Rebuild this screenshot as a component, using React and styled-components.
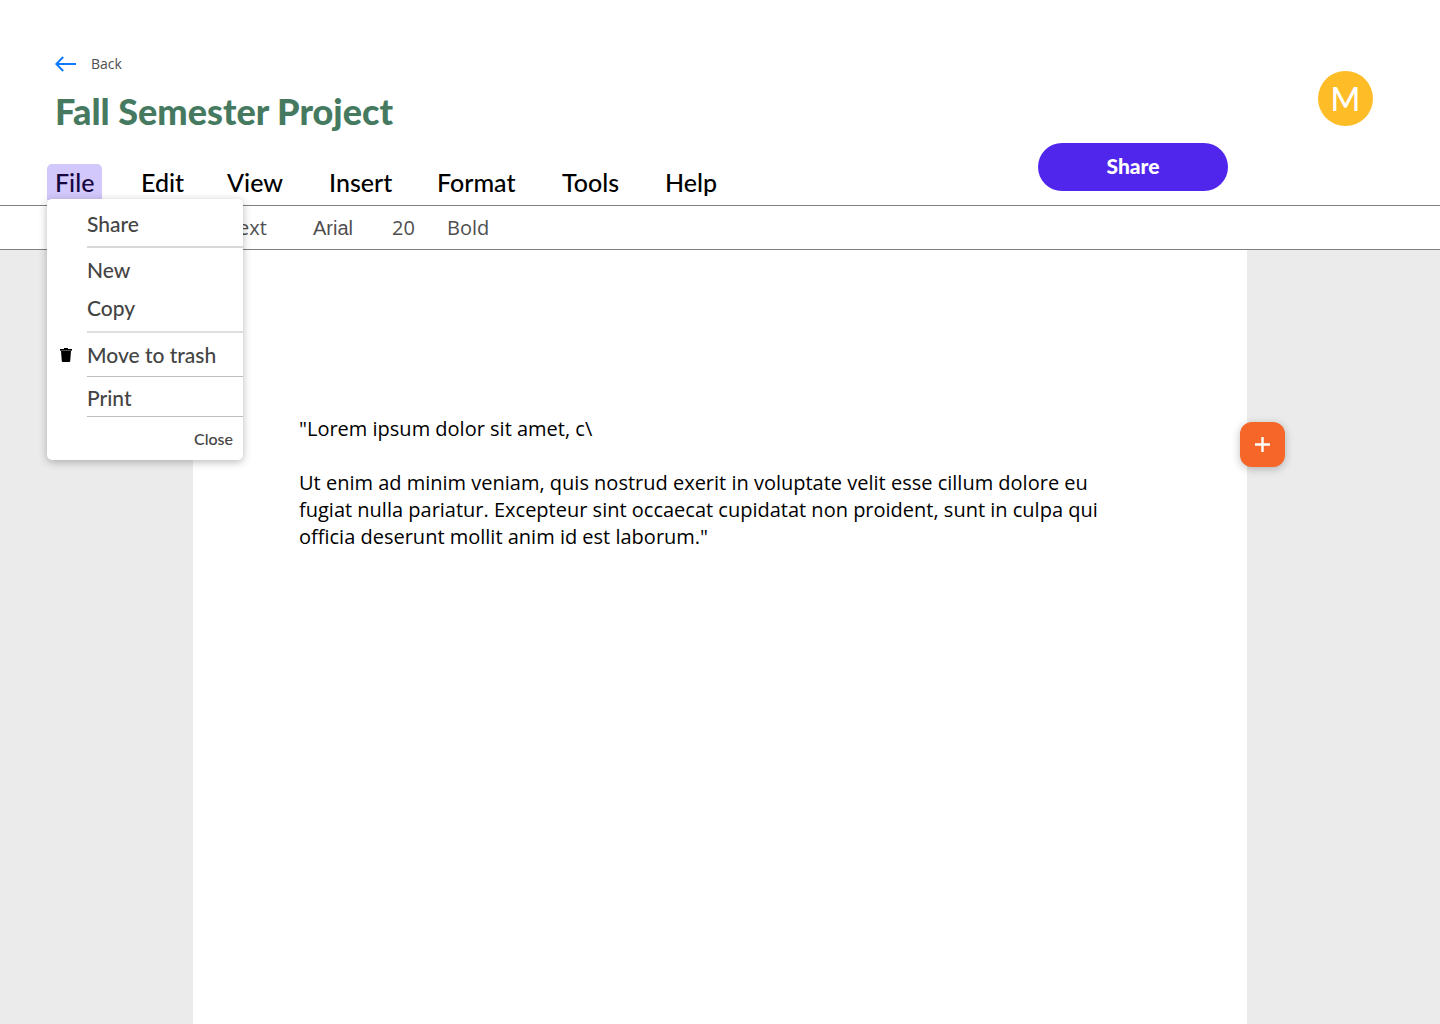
import React from "react";
import styled, { createGlobalStyle } from "styled-components";

const display = `Futura, "Futura PT", Lato, "Open Sans", sans-serif`;
const body = `"Open Sans", "Noto Sans", sans-serif`;

const GlobalStyle = createGlobalStyle`
  *, *::before, *::after { box-sizing: border-box; }
  body { margin: 0; background: #fff; color: #000; font-family: ${body}; }
  button { border: 0; padding: 0; background: none; color: inherit; cursor: pointer; }
`;

const Screen = styled.div`
  min-height: 100vh;
  display: flex;
  flex-direction: column;
`;

const Header = styled.header`
  display: flex;
  justify-content: space-between;
  align-items: flex-start;
  padding: 0 67px 0 47px;
  border-bottom: 1px solid #808080;
`;

const Heading = styled.div`
  display: flex;
  flex-direction: column;
  padding-top: 52px;
`;

const BackLink = styled.a`
  display: flex;
  align-items: center;
  gap: 15px;
  height: 24px;
  padding-left: 8px;
  color: #4f4f4f;
  font-size: 14px;
  line-height: 20px;
  text-decoration: none;
`;

const Title = styled.h1`
  margin: 11px 0 0;
  padding-left: 8px;
  color: #467a60;
  font: 900 36px/48px ${display};
`;

const MenuBar = styled.nav`
  display: grid;
  grid-template-columns: 86px 86px 102px 108px 125px 103px auto;
  margin-top: 29px;
  height: 41px;
`;

const MenuSlot = styled.div`
  position: relative;
`;

const MenuButton = styled.button`
  height: 36px;
  padding: 0 8px;
  border-radius: 5px 5px 0 0;
  background: ${(p) => (p.$open ? "#d3c8fb" : "transparent")};
  color: ${(p) => (p.$open ? "#150540" : "#000")};
  font: 500 25px/36px ${display};
`;

const Dropdown = styled.div`
  position: absolute;
  z-index: 2;
  top: 35px;
  left: 0;
  width: 196px;
  padding-bottom: 3px;
  border-radius: 5px;
  background: #fff;
  box-shadow: 0 2px 8px rgba(0, 0, 0, 0.28);
`;

const Group = styled.div`
  display: flex;
  flex-direction: column;
  gap: 2px;
  margin-left: 40px;
  padding: ${(p) => p.$pad};
  border-bottom: ${(p) => p.$rule};
`;

const MenuItem = styled.button`
  display: flex;
  align-items: center;
  height: 36px;
  color: #444;
  font: 500 21px/36px ${display};
  white-space: nowrap;

  svg {
    flex: none;
    margin: 0 14px 0 -28px;
  }
`;

const CloseButton = styled.button`
  display: block;
  margin: 4px 10px 0 auto;
  color: #444;
  font: 500 16px/36px ${display};
`;

const Actions = styled.div`
  display: flex;
  align-items: flex-end;
  gap: 90px;
  padding-top: 71px;
`;

const ShareButton = styled.button`
  width: 190px;
  height: 48px;
  margin-top: 72px;
  padding-bottom: 2px;
  border-radius: 24px;
  background: #5026ed;
  color: #fff;
  font: 900 21px/46px ${display};
`;

const Avatar = styled.button`
  align-self: flex-start;
  width: 55px;
  height: 55px;
  border-radius: 50%;
  background: #febd27;
  color: #fff;
  font: 500 32px/55px ${display};
`;

const Toolbar = styled.div`
  display: grid;
  grid-template-columns: 86px 79px 55px auto;
  justify-content: start;
  justify-items: start;
  align-items: baseline;
  height: 44px;
  padding-left: 227px;
  border-bottom: 1px solid #808080;
`;

const Tool = styled.button`
  color: #4f4f4f;
  font: 400 20px/43px ${(p) => p.$face || body};
`;

const Desk = styled.main`
  flex: 1;
  display: flex;
  padding: 0 193px;
  background: #ebebeb;
`;

const Page = styled.article`
  position: relative;
  flex: 1;
  padding: 165px 140px 80px 106px;
  background: #fff;
  font-size: 20px;
  line-height: 27px;

  p { margin: 0 0 27px; }
`;

const AddButton = styled.button`
  position: absolute;
  top: 172px;
  right: -38px;
  display: grid;
  place-items: center;
  width: 45px;
  height: 45px;
  border-radius: 12px;
  background: #f66628;
  box-shadow: 0 2px 8px rgba(0, 0, 0, 0.25);
`;

const BackArrow = () => (
  <svg width="21" height="16" viewBox="0 0 21 16" fill="none" stroke="#0a7aff" strokeWidth="2" aria-hidden="true">
    <path d="M21 8H1.5M8.2 1L1.3 8l6.9 7" />
  </svg>
);

const TrashIcon = () => (
  <svg width="14" height="14" viewBox="0 0 14 14" aria-hidden="true">
    <path d="M5 0h4v1H5zM1 1h12v1H1z" fill="#000" />
    <path d="M1 2h12v1H1z" fill="#555" />
    <path d="M2 3h10l-.8 9.9a1 1 0 0 1-1 1.100H3.800a1 1 0 0 1-1-1.100z" fill="#000" />
  </svg>
);

const PlusIcon = () => (
  <svg width="15" height="15" viewBox="0 0 15 15" stroke="#fff" strokeWidth="2.4" aria-hidden="true">
    <path d="M7.500 0v15M0 7.500h15" />
  </svg>
);

const menus = ["Edit", "View", "Insert", "Format", "Tools", "Help"];

export default function App() {
  const [open, setOpen] = React.useState(true);

  return (
    <Screen>
      <GlobalStyle />
      <Header>
        <Heading>
          <BackLink href="#">
            <BackArrow />
            Back
          </BackLink>
          <Title>Fall Semester Project</Title>
          <MenuBar aria-label="Document menu">
            <MenuSlot>
              <MenuButton $open={open} aria-expanded={open} onClick={() => setOpen(!open)}>
                File
              </MenuButton>
              {open && (
                <Dropdown>
                  <Group $pad="7px 0 4px" $rule="2px solid #d8d8d8">
                    <MenuItem>Share</MenuItem>
                  </Group>
                  <Group $pad="4px 0 5px" $rule="2px solid #dedede">
                    <MenuItem>New</MenuItem>
                    <MenuItem>Copy</MenuItem>
                  </Group>
                  <Group $pad="4px 0 3px" $rule="1px solid #bdbdbd">
                    <MenuItem>
                      <TrashIcon />
                      Move to trash
                    </MenuItem>
                  </Group>
                  <Group $pad="3px 0 0" $rule="1px solid #bdbdbd">
                    <MenuItem>Print</MenuItem>
                  </Group>
                  <CloseButton onClick={() => setOpen(false)}>Close</CloseButton>
                </Dropdown>
              )}
            </MenuSlot>
            {menus.map((name) => (
              <MenuSlot key={name}>
                <MenuButton>{name}</MenuButton>
              </MenuSlot>
            ))}
          </MenuBar>
        </Heading>
        <Actions>
          <ShareButton>Share</ShareButton>
          <Avatar aria-label="Account">M</Avatar>
        </Actions>
      </Header>
      <Toolbar role="toolbar" aria-label="Text formatting">
        <Tool>Text</Tool>
        <Tool $face={`"Liberation Sans", Arial, sans-serif`}>Arial</Tool>
        <Tool>20</Tool>
        <Tool>Bold</Tool>
      </Toolbar>
      <Desk>
        <Page>
          <p>"Lorem ipsum dolor sit amet, c\</p>
          <p>
            Ut enim ad minim veniam, quis nostrud exerit in voluptate velit esse cillum dolore eu
            fugiat nulla pariatur. Excepteur sint occaecat cupidatat non proident, sunt in culpa qui
            officia deserunt mollit anim id est laborum."
          </p>
          <AddButton aria-label="Add">
            <PlusIcon />
          </AddButton>
        </Page>
      </Desk>
    </Screen>
  );
}
